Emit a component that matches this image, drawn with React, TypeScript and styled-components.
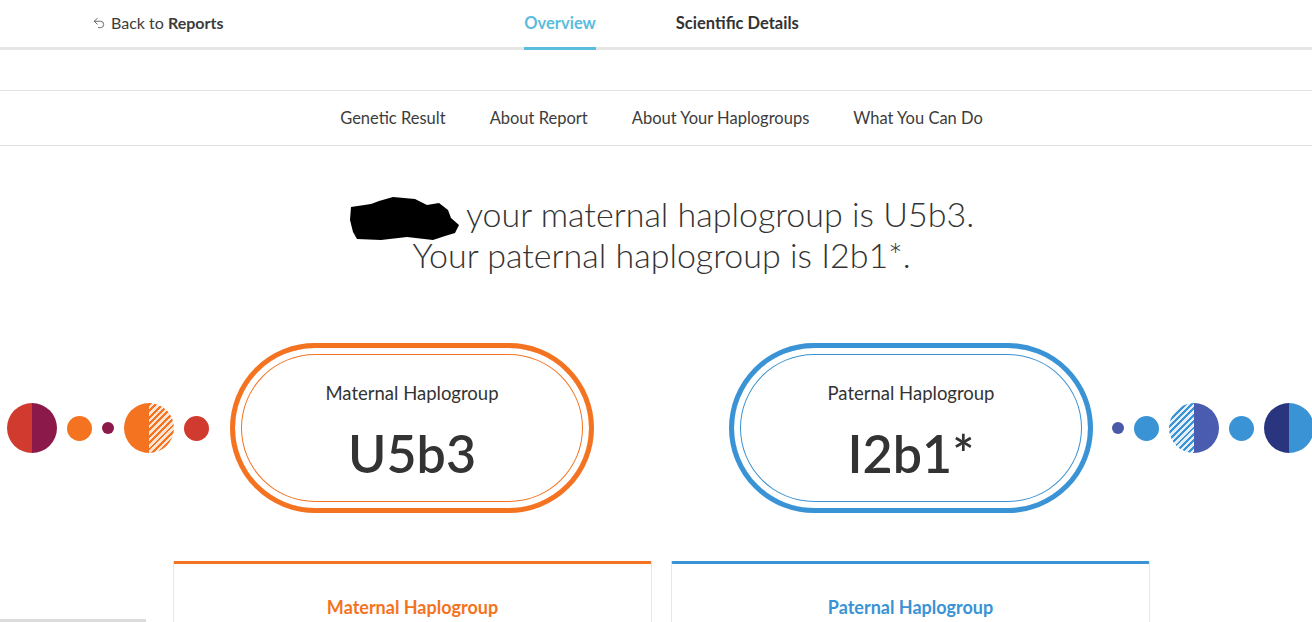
import React from "react";
import styled, { createGlobalStyle } from "styled-components";
import { Undo2 } from "lucide-react";

const GlobalStyle = createGlobalStyle`
  html, body {
    margin: 0;
    padding: 0;
    background: #fff;
    overflow: hidden;
  }
  body {
    font-family: Lato, "Open Sans", Arial, sans-serif;
    color: #333;
  }
`;

const ORANGE = "#f47321";
const BLUE = "#3a93d4";

const Page = styled.div`
  width: 1323px;
`;

const NavBar = styled.nav`
  display: grid;
  grid-template-columns: 1fr auto 1fr;
  height: 50px;
  box-shadow: inset 0 -3px 0 #e6e6e6;
`;

const BackLink = styled.a`
  display: flex;
  align-items: center;
  gap: 5px;
  padding-left: 92px;
  padding-bottom: 5px;
  font-size: 16px;
  color: #3c3c3c;
  text-decoration: none;

  b {
    font-weight: 700;
  }
`;

const Tabs = styled.div`
  display: flex;
  gap: 80px;
`;

const Tab = styled.a<{ $active?: boolean }>`
  display: flex;
  align-items: center;
  padding-bottom: 4px;
  font-size: 16.5px;
  font-weight: 700;
  color: ${(p) => (p.$active ? "#5bbcdc" : "#333")};
  box-shadow: ${(p) => (p.$active ? "inset 0 -3px 0 #5bbcdc" : "none")};
`;

const SubNav = styled.div`
  margin-top: 40px;
  height: 54px;
  border-top: 1px solid #e3e3e3;
  border-bottom: 1px solid #e3e3e3;
  display: flex;
  justify-content: center;
  align-items: center;
  gap: 44px;
  font-size: 16.5px;
  color: #3c3c3c;
`;

const Heading = styled.h1`
  margin: 47px 0 0;
  text-align: center;
  font-size: 34px;
  line-height: 41px;
  font-weight: 300;
  color: #333;
`;

const Redacted = styled.svg`
  display: inline-block;
  vertical-align: middle;
  margin: -10px 6px -10px 0;
`;

const PillRow = styled.div`
  margin-top: 68px;
  display: flex;
  justify-content: center;
  align-items: center;
`;

const DotGroup = styled.div<{ $side: "left" | "right" }>`
  display: flex;
  align-items: center;
  gap: 10px;
  width: 204px;
  ${(p) => (p.$side === "left" ? "margin-right: 19px;" : "margin-left: 19px;")}
`;

const Dot = styled.span<{ $size: number; $bg: string }>`
  flex: none;
  width: ${(p) => p.$size}px;
  height: ${(p) => p.$size}px;
  border-radius: 50%;
  background: ${(p) => p.$bg};
`;

const Pill = styled.div<{ $color: string }>`
  box-sizing: border-box;
  width: 364px;
  height: 170px;
  border: 5px solid ${(p) => p.$color};
  border-radius: 85px;
  box-shadow: inset 0 0 0 6px #fff, inset 0 0 0 7px ${(p) => p.$color};
  display: flex;
  flex-direction: column;
  align-items: center;
  padding-top: 35px;
`;

const PillLabel = styled.div`
  font-size: 18.5px;
  line-height: 20px;
  color: #333;
`;

const PillValue = styled.div`
  margin-top: 20px;
  font-size: 52px;
  line-height: 60px;
  font-weight: 600;
  color: #333;
`;

const PillGap = styled.div`
  width: 135px;
`;

const Cards = styled.div`
  margin-top: 48px;
  display: flex;
  justify-content: center;
  gap: 19px;
`;

const Card = styled.div<{ $color: string }>`
  box-sizing: border-box;
  width: 479px;
  height: 80px;
  border: 1px solid #e6e6e6;
  border-top: 3px solid ${(p) => p.$color};
  border-radius: 2px 2px 0 0;
  padding-top: 32px;
  text-align: center;
  font-size: 18px;
  font-weight: 700;
  color: ${(p) => p.$color};
`;

const ScrollThumb = styled.div`
  position: fixed;
  left: 0;
  bottom: 0;
  width: 146px;
  height: 3px;
  background: #dcdcdc;
`;

const split = (a: string, b: string) =>
  `linear-gradient(to right, ${a} 50%, ${b} 50%)`;
const hatchRight = (c: string, light: string) =>
  `linear-gradient(to right, ${c} 50%, transparent 50%), repeating-linear-gradient(135deg, ${c} 0 2px, ${light} 2px 4.5px)`;
const hatchLeft = (c: string, light: string) =>
  `linear-gradient(to right, transparent 50%, ${c} 50%), repeating-linear-gradient(135deg, ${light} 0 2.5px, ${BLUE} 2.5px 4.5px)`;

const App = () => {
  return (
    <Page>
      <GlobalStyle />
      <NavBar>
        <BackLink href="#">
          <Undo2 size={14} strokeWidth={1.5} color="#555" />
          <span>
            Back to <b>Reports</b>
          </span>
        </BackLink>
        <Tabs>
          <Tab $active>Overview</Tab>
          <Tab>Scientific Details</Tab>
        </Tabs>
        <div />
      </NavBar>

      <SubNav>
        <span>Genetic Result</span>
        <span>About Report</span>
        <span>About Your Haplogroups</span>
        <span>What You Can Do</span>
      </SubNav>

      <Heading>
        <Redacted width="111" height="45" viewBox="0 0 111 45">
          <path
            d="M2 11 L22 8 L30 5 L44 1 L66 3 L78 9 L90 7 L99 14 L102 22 L110 29 L106 37 L96 40 L84 44 L58 41 L32 44 L8 43 L4 36 L1 24 Z"
            fill="#000"
          />
        </Redacted>
        your maternal haplogroup is U5b3.
        <br />
        Your paternal haplogroup is I2b1*.
      </Heading>

      <PillRow>
        <DotGroup $side="left">
          <Dot $size={50} $bg={split("#d13a2f", "#8b1a4a")} />
          <Dot $size={25} $bg={ORANGE} />
          <Dot $size={12} $bg="#8b1a4a" />
          <Dot $size={50} $bg={hatchRight(ORANGE, "#fde3d2")} />
          <Dot $size={25} $bg="#d13a2f" />
        </DotGroup>
        <Pill $color={ORANGE}>
          <PillLabel>Maternal Haplogroup</PillLabel>
          <PillValue>U5b3</PillValue>
        </Pill>
        <PillGap />
        <Pill $color={BLUE}>
          <PillLabel>Paternal Haplogroup</PillLabel>
          <PillValue>I2b1*</PillValue>
        </Pill>
        <DotGroup $side="right">
          <Dot $size={12} $bg="#4a5aa8" />
          <Dot $size={25} $bg={BLUE} />
          <Dot $size={50} $bg={hatchLeft("#4a5cb0", "#e4eef8")} />
          <Dot $size={25} $bg={BLUE} />
          <Dot $size={50} $bg={split("#2a3580", BLUE)} />
        </DotGroup>
      </PillRow>

      <Cards>
        <Card $color={ORANGE}>Maternal Haplogroup</Card>
        <Card $color={BLUE}>Paternal Haplogroup</Card>
      </Cards>
      <ScrollThumb />
    </Page>
  );
};

export default App;
